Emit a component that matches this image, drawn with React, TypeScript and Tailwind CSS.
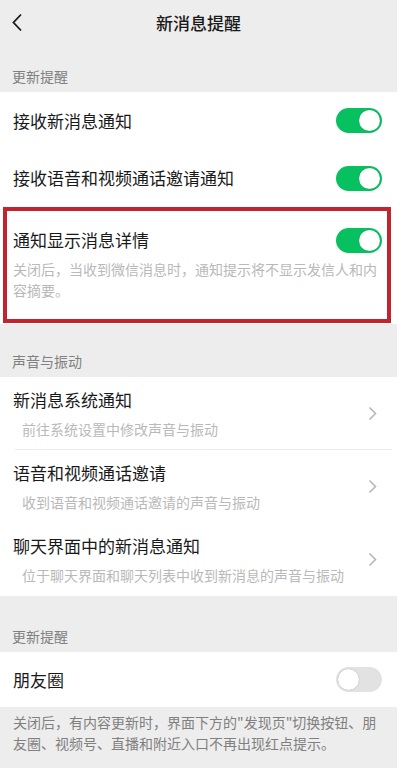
import React, { useState } from 'react';

const font = { fontFamily: '"Noto Sans CJK SC", "Noto Sans", sans-serif' };

const Toggle: React.FC<{ on: boolean; onClick?: () => void }> = ({ on, onClick }) => (
  <button
    onClick={onClick}
    className={`relative h-[25px] w-[46px] shrink-0 rounded-full ${on ? 'bg-[#07c160]' : 'bg-[#e2e2e2]'}`}
  >
    <span
      className={`absolute top-[2px] h-[21px] w-[21px] rounded-full bg-white shadow-[0_0_1px_rgba(0,0,0,0.35)] ${
        on ? 'right-[2px]' : 'left-[2px]'
      }`}
    />
  </button>
);

const Chevron: React.FC = () => (
  <svg width="9" height="15" viewBox="0 0 9 15" className="shrink-0">
    <path d="M1.5 1.5 L7.5 7.5 L1.5 13.5" fill="none" stroke="#b7b7b7" strokeWidth="1.6" />
  </svg>
);

const SectionLabel: React.FC<{ text: string; className?: string }> = ({ text, className }) => (
  <div className={`flex items-end px-[12px] text-[14px] leading-[20px] text-[#808080] ${className}`}>{text}</div>
);

const LinkRow: React.FC<{ title: string; sub: string; divider?: boolean }> = ({ title, sub, divider }) => (
  <div className="relative flex h-[73px] items-center justify-between pl-[13px] pr-[20px]">
    <div className="flex flex-col">
      <div className="text-[17px] leading-[24px] text-[#191919]">{title}</div>
      <div className="mt-[7px] pl-[9px] text-[14px] leading-[20px] text-[#b9b9b9]">{sub}</div>
    </div>
    <Chevron />
    {divider && <div className="absolute bottom-0 left-[15px] right-[5px] h-px bg-[#ececec]" />}
  </div>
);

const App: React.FC = () => {
  const [newMsg, setNewMsg] = useState(true);
  const [callInvite, setCallInvite] = useState(true);
  const [detail, setDetail] = useState(true);
  const [moments, setMoments] = useState(false);

  return (
    <div className="min-h-[769px] w-[410px] bg-white" style={font}>
      <div className="w-[397px] bg-[#ededed]">
        {/* Header */}
        <div className="relative flex h-[46px] items-center justify-center">
          <svg width="12" height="19" viewBox="0 0 12 19" className="absolute left-[11px] top-[13px]">
            <path d="M10 1.5 L2.5 9.5 L10 17.5" fill="none" stroke="#1a1a1a" strokeWidth="1.8" />
          </svg>
          <span className="text-[17px] font-medium text-[#191919]">新消息提醒</span>
        </div>

        <SectionLabel text="更新提醒" className="h-[46px] pb-[6px]" />

        {/* Group 1 */}
        <div className="bg-white">
          <div className="flex h-[57px] items-center justify-between pl-[13px] pr-[15px]">
            <span className="text-[17px] text-[#191919]">接收新消息通知</span>
            <Toggle on={newMsg} onClick={() => setNewMsg(!newMsg)} />
          </div>
          <div className="flex h-[58px] items-center justify-between pl-[13px] pr-[15px]">
            <span className="text-[17px] text-[#191919]">接收语音和视频通话邀请通知</span>
            <Toggle on={callInvite} onClick={() => setCallInvite(!callInvite)} />
          </div>
          <div className="pb-[1px] pl-[3px] pr-[6px]">
            <div className="h-[116px] border-4 border-[#c1232f] pl-[6px] pr-[5px] pt-[17px]">
              <div className="flex h-[24px] items-center justify-between">
                <span className="text-[17px] leading-[24px] text-[#191919]">通知显示消息详情</span>
                <Toggle on={detail} onClick={() => setDetail(!detail)} />
              </div>
              <p className="mt-[7px] text-[14px] leading-[21px] text-[#b9b9b9]">
                关闭后，当收到微信消息时，通知提示将不显示发信人和内容摘要。
              </p>
            </div>
          </div>
        </div>

        <SectionLabel text="声音与振动" className="h-[53px] pb-[6px]" />

        {/* Group 2 */}
        <div className="bg-white">
          <LinkRow title="新消息系统通知" sub="前往系统设置中修改声音与振动" divider />
          <LinkRow title="语音和视频通话邀请" sub="收到语音和视频通话邀请的声音与振动" />
          <LinkRow title="聊天界面中的新消息通知" sub="位于聊天界面和聊天列表中收到新消息的声音与振动" />
        </div>

        <SectionLabel text="更新提醒" className="h-[56px] pb-[6px]" />

        <div className="flex h-[55px] items-center justify-between bg-white pl-[13px] pr-[15px]">
          <span className="text-[17px] text-[#191919]">朋友圈</span>
          <Toggle on={moments} onClick={() => setMoments(!moments)} />
        </div>

        <p className="px-[13px] pb-[14px] pt-[5px] text-[14px] leading-[21px] text-[#808080]">
          关闭后，有内容更新时，界面下方的"发现页"切换按钮、朋友圈、视频号、直播和附近入口不再出现红点提示。
        </p>
      </div>
    </div>
  );
};

export default App;
